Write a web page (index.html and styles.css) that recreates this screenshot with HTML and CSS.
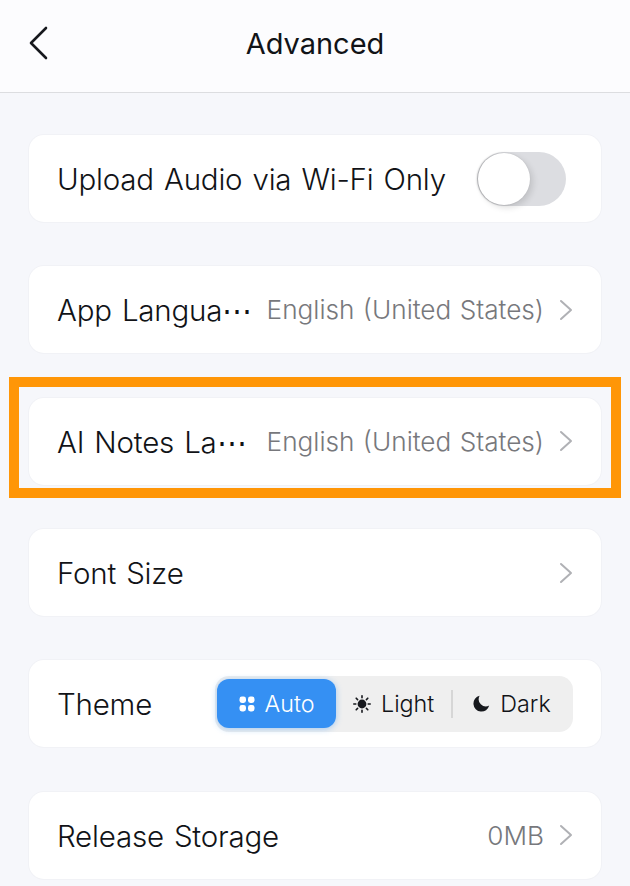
FILE: index.html
```html
<!DOCTYPE html>
<html lang="en">
<head>
    <meta charset="UTF-8">
    <meta name="viewport" content="width=device-width, initial-scale=1.0">
    <title>Advanced</title>
    <link rel="stylesheet" href="styles.css">
</head>
<body>
    <header class="nav-bar">
        <svg class="back-icon" width="22" height="34" viewBox="0 0 22 34"><path d="M18 2 L3 17 L18 32" /></svg>
        <h1>Advanced</h1>
    </header>

    <main class="settings">
        <div class="card">
            <span class="label">Upload Audio via Wi-Fi Only</span>
            <div class="toggle"><div class="knob"></div></div>
        </div>

        <div class="card">
            <span class="label label-short">App Langua⋯</span>
            <span class="value">English (United States)</span>
            <svg class="chevron" width="14" height="22" viewBox="0 0 14 22"><path d="M2 2 L12 11 L2 20" /></svg>
        </div>

        <div class="card">
            <span class="label label-short">AI Notes La⋯</span>
            <span class="value">English (United States)</span>
            <svg class="chevron" width="14" height="22" viewBox="0 0 14 22"><path d="M2 2 L12 11 L2 20" /></svg>
            <div class="highlight"></div>
        </div>

        <div class="card">
            <span class="label">Font Size</span>
            <svg class="chevron" width="14" height="22" viewBox="0 0 14 22"><path d="M2 2 L12 11 L2 20" /></svg>
        </div>

        <div class="card">
            <span class="label">Theme</span>
            <div class="theme-switch">
                <div class="theme-option active">
                    <svg width="16" height="16" viewBox="0 0 16 16"><rect x="0.5" y="0.5" width="6.5" height="6.5" rx="2.4" /><rect x="9" y="0.5" width="6.5" height="6.5" rx="2.4" /><rect x="0.5" y="9" width="6.5" height="6.5" rx="2.4" /><rect x="9" y="9" width="6.5" height="6.5" rx="2.4" /></svg>
                    Auto
                </div>
                <div class="theme-option light">
                    <svg width="18" height="18" viewBox="0 0 18 18"><circle cx="9" cy="9" r="4.4" /><path class="rays" d="M9 0.8 V2.8 M9 15.2 V17.2 M0.8 9 H2.8 M15.2 9 H17.2 M3.2 3.2 L4.6 4.6 M13.4 13.4 L14.8 14.8 M3.2 14.8 L4.6 13.4 M13.4 4.6 L14.8 3.2" /></svg>
                    Light
                </div>
                <div class="divider"></div>
                <div class="theme-option dark">
                    <svg width="17" height="17" viewBox="0 0 17 17"><path d="M6.6 0.8 A8 8 0 1 0 16.2 10.6 A7.2 7.2 0 0 1 6.6 0.8 Z" /></svg>
                    Dark
                </div>
            </div>
        </div>

        <div class="card">
            <span class="label">Release Storage</span>
            <span class="value">0MB</span>
            <svg class="chevron" width="14" height="22" viewBox="0 0 14 22"><path d="M2 2 L12 11 L2 20" /></svg>
        </div>
    </main>
</body>
</html>
```

FILE: styles.css
```css
* {
    box-sizing: border-box;
}
html, body {
    margin: 0;
    height: 100%;
}
body {
    width: 630px;
    height: 886px;
    overflow: hidden;
    background: #f6f7fb;
    font-family: 'Inter', Arial, sans-serif;
    font-weight: 350;
    color: #111317;
}
.nav-bar {
    height: 93px;
    background: #fcfcfe;
    border-bottom: 1px solid #dcdde0;
    display: flex;
    align-items: center;
    justify-content: center;
    position: relative;
}
.nav-bar h1 {
    margin: 0 0 5px;
    font-size: 29px;
    font-weight: 400;
}
.back-icon {
    position: absolute;
    left: 28px;
    top: 26px;
}
.back-icon path {
    fill: none;
    stroke: #16181d;
    stroke-width: 2.6;
    stroke-linecap: round;
    stroke-linejoin: round;
}
.settings {
    padding: 42px 29px 0;
    display: flex;
    flex-direction: column;
    gap: 44.35px;
}
.card {
    height: 87px;
    background: white;
    border-radius: 15px;
    box-shadow: 0 0 0 1px #f1f2f6;
    padding: 0 28px;
    display: flex;
    align-items: center;
    position: relative;
}
.label {
    padding-top: 1px;
    font-size: 29.5px;
    letter-spacing: -0.2px;
    word-spacing: 2px;
    white-space: nowrap;
    flex: 1;
}
.label-short {
    flex: none;
    width: 200px;
}
.value {
    margin-left: auto;
    font-size: 26.2px;
    word-spacing: 1px;
    color: #77787c;
    white-space: nowrap;
}
.chevron {
    margin-left: 15px;
    flex: none;
}
.chevron path {
    fill: none;
    stroke: #b0b1b5;
    stroke-width: 2;
    stroke-linecap: round;
    stroke-linejoin: round;
}
.toggle {
    width: 89px;
    height: 54px;
    border-radius: 27px;
    background: #dcdde1;
    margin-right: 7px;
    flex: none;
}
.knob {
    width: 52px;
    height: 52px;
    margin: 1px;
    border-radius: 50%;
    background: white;
    box-shadow: -1px 0 2px rgba(0,0,0,0.25), 3px 3px 6px rgba(0,0,0,0.12);
}
.highlight {
    position: absolute;
    left: -20px;
    right: -20px;
    top: -21px;
    bottom: -13px;
    border: 10px solid #ff9607;
}
.theme-switch {
    width: 358px;
    height: 56px;
    background: #efefef;
    border-radius: 14px;
    display: flex;
    align-items: center;
    position: absolute;
    left: 186px;
}
.theme-option {
    display: flex;
    align-items: center;
    gap: 10px;
    font-size: 23.3px;
}
.theme-option.active {
    width: 119px;
    height: 49px;
    margin-left: 2px;
    justify-content: center;
    border-radius: 12px;
    background: #3590f3;
    color: white;
    box-shadow: 0 1px 6px rgba(53,144,243,0.4);
}
.theme-option.active svg {
    fill: white;
}
.theme-option.light {
    margin-left: 17px;
}
.theme-option.dark {
    margin-left: 20px;
}
.theme-option.light svg,
.theme-option.dark svg {
    fill: #16181d;
}
.rays {
    stroke: #16181d;
    stroke-width: 1.6;
    stroke-linecap: round;
}
.divider {
    width: 2px;
    height: 28px;
    margin-left: 17px;
    background: #d6d6d6;
}
```
